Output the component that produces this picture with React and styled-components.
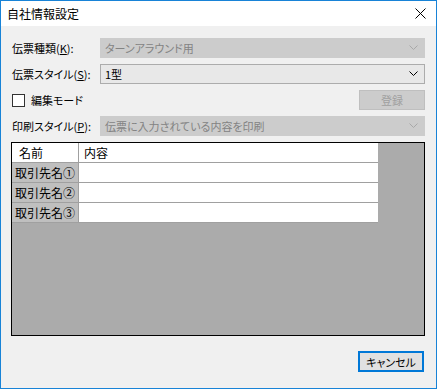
import React from "react";
import styled, { createGlobalStyle } from "styled-components";

const GlobalStyle = createGlobalStyle`
  html, body {
    margin: 0;
    padding: 0;
    background: #ffffff;
  }
  body {
    font-family: "Noto Sans CJK JP", "Noto Sans", sans-serif;
    font-size: 11px;
    font-feature-settings: "palt";
  }
`;

const Window = styled.div`
  width: 437px;
  height: 389px;
  box-sizing: border-box;
  border: 1px solid #1883d7;
  display: flex;
  flex-direction: column;
  background: #f0f0f0;
`;

const TitleBar = styled.div`
  height: 25px;
  background: #ffffff;
  display: flex;
  align-items: center;
  justify-content: space-between;
  padding: 0 10px 0 6px;
  font-size: 12px;
  color: #000;
`;

const Body = styled.div`
  flex: 1;
  display: flex;
  flex-direction: column;
  padding: 12px 11px 0 10px;
`;

const Form = styled.div`
  display: flex;
  flex-direction: column;
  gap: 6px;
`;

const Row = styled.div`
  display: grid;
  grid-template-columns: 89px 1fr;
  align-items: center;
  height: 20px;
`;

const Label = styled.span`
  padding-left: 1px;
  color: #000;
  white-space: nowrap;
  u {
    text-decoration: underline;
  }
`;

const Combo = styled.div`
  height: 20px;
  box-sizing: border-box;
  display: flex;
  align-items: center;
  justify-content: space-between;
  padding: 0 6px 0 4px;
  border: 1px solid ${(p) => (p.disabled ? "#cccccc" : "#acacac")};
  background: ${(p) => (p.disabled ? "#cccccc" : "#e8e8e8")};
  color: ${(p) => (p.disabled ? "#838383" : "#000")};
`;

const CheckRow = styled.div`
  display: flex;
  align-items: center;
  justify-content: space-between;
  height: 20px;
`;

const CheckLabel = styled.label`
  display: flex;
  align-items: center;
  gap: 6px;
  padding-left: 1px;
`;

const Box = styled.span`
  width: 13px;
  height: 13px;
  box-sizing: border-box;
  border: 1px solid #333333;
  background: #ffffff;
`;

const Button = styled.div`
  width: ${(p) => p.w || 66}px;
  height: ${(p) => p.h || 20}px;
  box-sizing: border-box;
  display: flex;
  align-items: center;
  justify-content: center;
  border: ${(p) => (p.primary ? "2px solid #0078d7" : "1px solid #bfbfbf")};
  background: ${(p) => (p.disabled ? "#cccccc" : "#e1e1e1")};
  color: ${(p) => (p.disabled ? "#a0a0a0" : "#000")};
`;

const GridFrame = styled.div`
  margin-top: 6px;
  height: 194px;
  box-sizing: border-box;
  border: 1px solid #000;
  background: #ababab;
`;

const Table = styled.div`
  width: 366px;
  display: grid;
  grid-template-columns: 66px 1fr;
  background: #a0a0a0;
  gap: 1px 1px;
  padding-bottom: 1px;
  font-size: 12px;
  font-feature-settings: normal;
`;

const HeadCell = styled.div`
  height: 19px;
  background: #ffffff;
  display: flex;
  align-items: center;
  padding-left: ${(p) => p.pad}px;
`;

const RowHead = styled.div`
  height: 19px;
  background: #bfbfbf;
  display: flex;
  align-items: center;
  padding-left: 3px;
  white-space: nowrap;
  overflow: hidden;
`;

const Cell = styled.div`
  height: 19px;
  background: #ffffff;
`;

const Footer = styled.div`
  display: flex;
  justify-content: flex-end;
  margin-top: 15px;
  padding-right: 1px;
`;

const Chevron = ({ color }) => (
  <svg width="9" height="6" viewBox="0 0 9 6">
    <polyline points="0.5,0.5 4.5,4.5 8.5,0.5" fill="none" stroke={color} strokeWidth="1" />
  </svg>
);

const CloseIcon = () => (
  <svg width="11" height="11" viewBox="0 0 11 11">
    <path d="M0.5 0.5 L10.5 10.5 M10.5 0.5 L0.5 10.5" stroke="#000" strokeWidth="1" />
  </svg>
);

const rows = ["取引先名①", "取引先名②", "取引先名③"];

export default function App() {
  return (
    <>
      <GlobalStyle />
      <Window>
        <TitleBar>
          <span>自社情報設定</span>
          <CloseIcon />
        </TitleBar>
        <Body>
          <Form>
            <Row>
              <Label>伝票種類(<u>K</u>):</Label>
              <Combo disabled>
                <span>ターンアラウンド用</span>
                <Chevron color="#a8a8a8" />
              </Combo>
            </Row>
            <Row>
              <Label>伝票スタイル(<u>S</u>):</Label>
              <Combo>
                <span>1型</span>
                <Chevron color="#000" />
              </Combo>
            </Row>
            <CheckRow>
              <CheckLabel>
                <Box />
                <span>編集モード</span>
              </CheckLabel>
              <Button disabled w={66} h={20}>登録</Button>
            </CheckRow>
            <Row>
              <Label>印刷スタイル(<u>P</u>):</Label>
              <Combo disabled>
                <span>伝票に入力されている内容を印刷</span>
                <Chevron color="#a8a8a8" />
              </Combo>
            </Row>
          </Form>
          <GridFrame>
            <Table>
              <HeadCell pad={7}>名前</HeadCell>
              <HeadCell pad={5}>内容</HeadCell>
              {rows.map((r) => (
                <React.Fragment key={r}>
                  <RowHead>{r}</RowHead>
                  <Cell />
                </React.Fragment>
              ))}
            </Table>
          </GridFrame>
          <Footer>
            <Button primary w={66} h={21}>キャンセル</Button>
          </Footer>
        </Body>
      </Window>
    </>
  );
}
